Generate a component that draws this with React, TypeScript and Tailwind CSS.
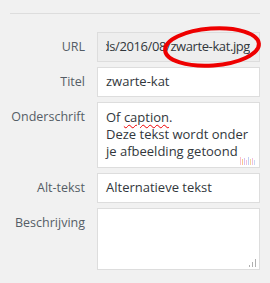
import React from 'react';

const font = { fontFamily: '"Open Sans", "Noto Sans", sans-serif' };

const Label: React.FC<{ text: string }> = ({ text }) => (
  <div className="text-right text-[12.5px] leading-[30px] text-[#555d66]">{text}</div>
);

const App: React.FC = () => {
  return (
    <div className="w-[270px] h-[283px] bg-[#f1f1f1] overflow-hidden" style={font}>
      <div className="ml-[10px] mr-[10px] mt-[13px] border-t border-[#dddddd]" />
      <div className="grid grid-cols-[85px_163px] gap-x-[12px] gap-y-[5px] mt-[18px]">
        <Label text="URL" />
        <div className="relative h-[30px]">
          <div className="h-full bg-[#eeeeee] border border-[#dddddd] pl-[8px] pr-[9px] text-[13px] tracking-[-0.4px] text-[#32373c]">
            <div className="h-full flex justify-end items-center overflow-hidden whitespace-nowrap">
              wp-content/uploads/2016/08/zwarte-kat.jpg
            </div>
          </div>
          <svg className="absolute left-[64px] top-[-7px]" width="104" height="46" viewBox="0 0 104 46">
            <ellipse cx="51" cy="22" rx="47" ry="18.5" transform="rotate(-4 51 22)" fill="none" stroke="#ee0000" strokeWidth="4" />
          </svg>
        </div>

        <Label text="Titel" />
        <div className="h-[30px] flex items-center bg-white border border-[#dddddd] px-[8px] text-[13px] text-[#32373c]">
          zwarte-kat
        </div>

        <Label text="Onderschrift" />
        <div className="relative h-[66px] bg-white border border-[#dddddd] pl-[8px] pt-[6px] text-[13px] leading-[17px] text-[#32373c]">
          <div>
            Of <span className="underline decoration-wavy decoration-[#e00] decoration-1 underline-offset-2">caption</span>.
          </div>
          <div>Deze tekst wordt onder</div>
          <div>je afbeelding getoond</div>
          <svg className="absolute right-[3px] bottom-[2px]" width="16" height="9" viewBox="0 0 16 9">
            <rect x="0" y="1" width="1" height="8" fill="#f8c0d0" />
            <rect x="2" y="3" width="1" height="6" fill="#f8c890" />
            <rect x="4" y="2" width="1" height="7" fill="#d8c0f0" />
            <rect x="6" y="4" width="1" height="5" fill="#f4c0d8" />
            <rect x="8" y="1" width="1" height="8" fill="#c0d0f4" />
            <rect x="10" y="3" width="1" height="6" fill="#f4d8a0" />
            <rect x="12" y="2" width="1" height="7" fill="#f0c0e0" />
            <rect x="14" y="4" width="1" height="5" fill="#c8d8f4" />
          </svg>
        </div>

        <Label text="Alt-tekst" />
        <div className="h-[30px] flex items-center bg-white border border-[#dddddd] px-[8px] text-[13px] text-[#32373c]">
          Alternatieve tekst
        </div>

        <Label text="Beschrijving" />
        <div className="relative h-[62px] bg-white border border-[#dddddd]">
          <svg className="absolute right-[2px] bottom-[2px]" width="8" height="8" viewBox="0 0 8 8">
            <rect x="6" y="0" width="1" height="8" fill="#b0b0b0" />
            <rect x="3" y="3" width="1" height="5" fill="#b0b0b0" />
            <rect x="0" y="6" width="1" height="2" fill="#b0b0b0" />
          </svg>
        </div>
      </div>
    </div>
  );
};

export default App;
